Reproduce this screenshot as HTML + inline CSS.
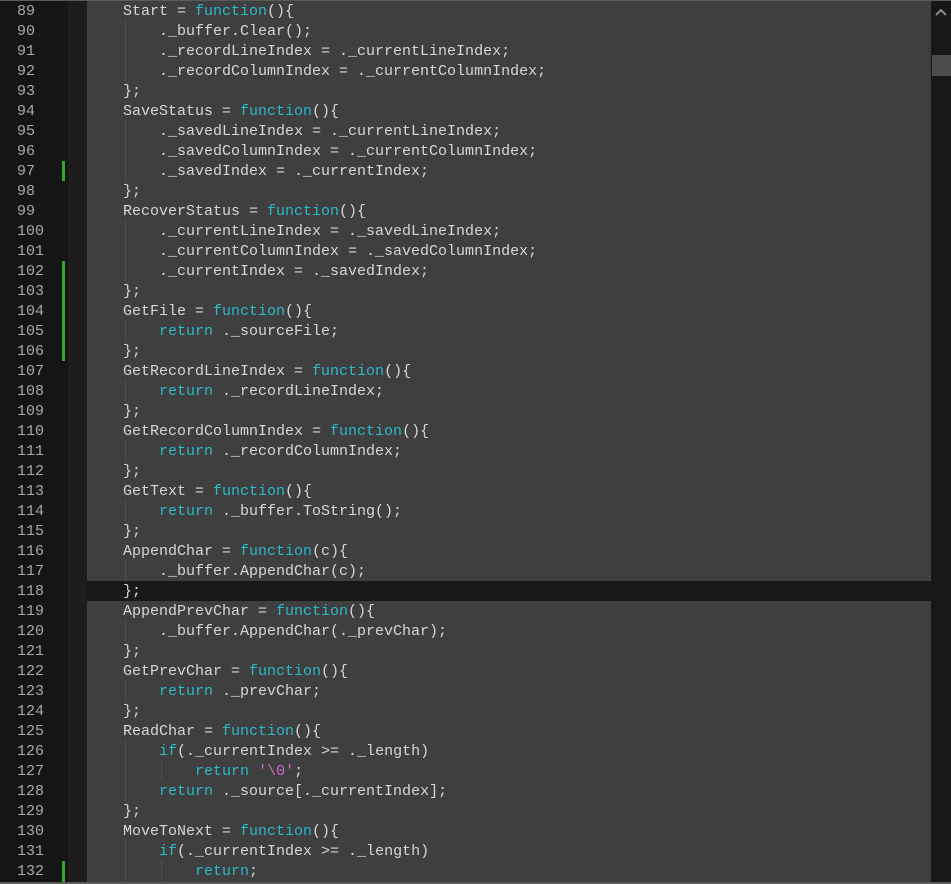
<!DOCTYPE html>
<html><head><style>
body{margin:0;width:951px;height:884px;overflow:hidden;background:#3f3f3f;position:relative;font-family:"Liberation Mono",monospace;font-size:15px}
#gut{position:absolute;left:0;top:0;width:68px;height:884px;background:#151515}
#fold{position:absolute;left:68px;top:0;width:19px;height:884px;background:#1d1d1d}
#sb{position:absolute;left:931px;top:0;width:20px;height:884px;background:#171717}
#thumb{position:absolute;left:932px;top:55px;width:19px;height:21px;background:#4d4d4d}
#topb{position:absolute;left:0;top:0;width:951px;height:1px;background:#5a5a5a}
#botb{position:absolute;left:0;top:882px;width:951px;height:2px;background:#5a5a5a}
.l{position:absolute;left:0;height:20px;line-height:21px;width:931px;white-space:pre;color:#d6d6d6}
.n{position:absolute;left:17px;width:40px;color:#a8a8a8}
.c{position:absolute;left:87px}
.k{color:#2bb8c8}.s{color:#c86cc8}
.hl{background:#181818}
.g{position:absolute;left:62px;width:3px;background:#2ea82e}
.guide{position:absolute;width:0;border-left:1px dotted #5c5c5c}
</style></head><body>
<div id="gut"></div><div id="fold"></div>
<div class="l hl" style="top:581px;left:87px;width:844px"></div>
<div class="guide" style="left:125px;top:21px;height:60px"></div>
<div class="guide" style="left:125px;top:121px;height:60px"></div>
<div class="guide" style="left:125px;top:221px;height:60px"></div>
<div class="guide" style="left:125px;top:321px;height:20px"></div>
<div class="guide" style="left:125px;top:381px;height:20px"></div>
<div class="guide" style="left:125px;top:441px;height:20px"></div>
<div class="guide" style="left:125px;top:501px;height:20px"></div>
<div class="guide" style="left:125px;top:561px;height:20px"></div>
<div class="guide" style="left:125px;top:621px;height:20px"></div>
<div class="guide" style="left:125px;top:681px;height:20px"></div>
<div class="guide" style="left:125px;top:741px;height:60px"></div>
<div class="guide" style="left:161px;top:761px;height:20px"></div>
<div class="guide" style="left:125px;top:841px;height:41px"></div>
<div class="guide" style="left:161px;top:861px;height:21px"></div>
<div class="g" style="top:161px;height:20px"></div>
<div class="g" style="top:261px;height:100px"></div>
<div class="g" style="top:861px;height:21px"></div>
<div class="l" style="top:1px"><span class="n">89</span><span class="c">    Start = <span class="k">function</span>(){</span></div>
<div class="l" style="top:21px"><span class="n">90</span><span class="c">        ._buffer.Clear();</span></div>
<div class="l" style="top:41px"><span class="n">91</span><span class="c">        ._recordLineIndex = ._currentLineIndex;</span></div>
<div class="l" style="top:61px"><span class="n">92</span><span class="c">        ._recordColumnIndex = ._currentColumnIndex;</span></div>
<div class="l" style="top:81px"><span class="n">93</span><span class="c">    };</span></div>
<div class="l" style="top:101px"><span class="n">94</span><span class="c">    SaveStatus = <span class="k">function</span>(){</span></div>
<div class="l" style="top:121px"><span class="n">95</span><span class="c">        ._savedLineIndex = ._currentLineIndex;</span></div>
<div class="l" style="top:141px"><span class="n">96</span><span class="c">        ._savedColumnIndex = ._currentColumnIndex;</span></div>
<div class="l" style="top:161px"><span class="n">97</span><span class="c">        ._savedIndex = ._currentIndex;</span></div>
<div class="l" style="top:181px"><span class="n">98</span><span class="c">    };</span></div>
<div class="l" style="top:201px"><span class="n">99</span><span class="c">    RecoverStatus = <span class="k">function</span>(){</span></div>
<div class="l" style="top:221px"><span class="n">100</span><span class="c">        ._currentLineIndex = ._savedLineIndex;</span></div>
<div class="l" style="top:241px"><span class="n">101</span><span class="c">        ._currentColumnIndex = ._savedColumnIndex;</span></div>
<div class="l" style="top:261px"><span class="n">102</span><span class="c">        ._currentIndex = ._savedIndex;</span></div>
<div class="l" style="top:281px"><span class="n">103</span><span class="c">    };</span></div>
<div class="l" style="top:301px"><span class="n">104</span><span class="c">    GetFile = <span class="k">function</span>(){</span></div>
<div class="l" style="top:321px"><span class="n">105</span><span class="c">        <span class="k">return</span> ._sourceFile;</span></div>
<div class="l" style="top:341px"><span class="n">106</span><span class="c">    };</span></div>
<div class="l" style="top:361px"><span class="n">107</span><span class="c">    GetRecordLineIndex = <span class="k">function</span>(){</span></div>
<div class="l" style="top:381px"><span class="n">108</span><span class="c">        <span class="k">return</span> ._recordLineIndex;</span></div>
<div class="l" style="top:401px"><span class="n">109</span><span class="c">    };</span></div>
<div class="l" style="top:421px"><span class="n">110</span><span class="c">    GetRecordColumnIndex = <span class="k">function</span>(){</span></div>
<div class="l" style="top:441px"><span class="n">111</span><span class="c">        <span class="k">return</span> ._recordColumnIndex;</span></div>
<div class="l" style="top:461px"><span class="n">112</span><span class="c">    };</span></div>
<div class="l" style="top:481px"><span class="n">113</span><span class="c">    GetText = <span class="k">function</span>(){</span></div>
<div class="l" style="top:501px"><span class="n">114</span><span class="c">        <span class="k">return</span> ._buffer.ToString();</span></div>
<div class="l" style="top:521px"><span class="n">115</span><span class="c">    };</span></div>
<div class="l" style="top:541px"><span class="n">116</span><span class="c">    AppendChar = <span class="k">function</span>(c){</span></div>
<div class="l" style="top:561px"><span class="n">117</span><span class="c">        ._buffer.AppendChar(c);</span></div>
<div class="l" style="top:581px"><span class="n">118</span><span class="c">    };</span></div>
<div class="l" style="top:601px"><span class="n">119</span><span class="c">    AppendPrevChar = <span class="k">function</span>(){</span></div>
<div class="l" style="top:621px"><span class="n">120</span><span class="c">        ._buffer.AppendChar(._prevChar);</span></div>
<div class="l" style="top:641px"><span class="n">121</span><span class="c">    };</span></div>
<div class="l" style="top:661px"><span class="n">122</span><span class="c">    GetPrevChar = <span class="k">function</span>(){</span></div>
<div class="l" style="top:681px"><span class="n">123</span><span class="c">        <span class="k">return</span> ._prevChar;</span></div>
<div class="l" style="top:701px"><span class="n">124</span><span class="c">    };</span></div>
<div class="l" style="top:721px"><span class="n">125</span><span class="c">    ReadChar = <span class="k">function</span>(){</span></div>
<div class="l" style="top:741px"><span class="n">126</span><span class="c">        <span class="k">if</span>(._currentIndex &gt;= ._length)</span></div>
<div class="l" style="top:761px"><span class="n">127</span><span class="c">            <span class="k">return</span> <span class="s">'\0'</span>;</span></div>
<div class="l" style="top:781px"><span class="n">128</span><span class="c">        <span class="k">return</span> ._source[._currentIndex];</span></div>
<div class="l" style="top:801px"><span class="n">129</span><span class="c">    };</span></div>
<div class="l" style="top:821px"><span class="n">130</span><span class="c">    MoveToNext = <span class="k">function</span>(){</span></div>
<div class="l" style="top:841px"><span class="n">131</span><span class="c">        <span class="k">if</span>(._currentIndex &gt;= ._length)</span></div>
<div class="l" style="top:861px"><span class="n">132</span><span class="c">            <span class="k">return</span>;</span></div>
<div id="sb"></div><div id="thumb"></div>
<svg style="position:absolute;left:932px;top:6px" width="18" height="12"><path d="M4 9 L9 4 L14 9" stroke="#8a8a8a" stroke-width="2" fill="none"/></svg>
<div id="topb"></div><div id="botb"></div>
</body></html>
